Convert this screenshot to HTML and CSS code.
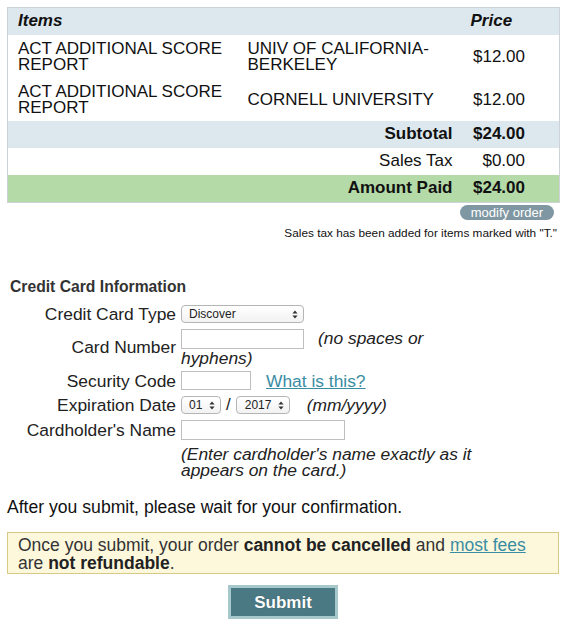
FILE: index.html
```html
<!DOCTYPE html>
<html>
<head>
<meta charset="utf-8">
<link rel="stylesheet" href="styles.css">
</head>
<body>
<div class="page">
  <table class="order">
    <colgroup><col class="c1"><col class="c2"><col class="c3"></colgroup>
    <thead>
      <tr class="head"><th class="t1">Items</th><th class="t2"></th><th class="t3">Price</th></tr>
    </thead>
    <tbody>
      <tr class="item"><td class="t1">ACT ADDITIONAL SCORE REPORT</td><td class="t2">UNIV OF CALIFORNIA-BERKELEY</td><td class="t3 num">$12.00</td></tr>
      <tr class="item"><td class="t1">ACT ADDITIONAL SCORE REPORT</td><td class="t2">CORNELL UNIVERSITY</td><td class="t3 num">$12.00</td></tr>
      <tr class="sum blue"><td class="lab strong" colspan="2">Subtotal</td><td class="t3 num strong">$24.00</td></tr>
      <tr class="sum"><td class="lab" colspan="2">Sales Tax</td><td class="t3 num">$0.00</td></tr>
      <tr class="sum green"><td class="lab strong" colspan="2">Amount Paid</td><td class="t3 num strong">$24.00</td></tr>
    </tbody>
  </table>

  <div class="modify-row"><button class="modify" type="button">modify order</button></div>
  <p class="tax-note">Sales tax has been added for items marked with "T."</p>

  <section class="cc">
    <h3 class="cc-title">Credit Card Information</h3>
    <div class="form-grid">
      <div class="lbl">Credit Card Type</div>
      <div class="fld">
        <span class="sel sel-type"><span class="sel-text">Discover</span><svg class="arr" width="6" height="9" viewBox="0 0 6 9"><path d="M3 0.5 L5.6 3.6 H0.4 Z M3 8.5 L5.6 5.4 H0.4 Z" fill="#333"/></svg></span>
      </div>

      <div class="lbl">Card Number</div>
      <div class="fld wrap"><span class="inp inp-num"></span><em class="hint-inline">(no spaces or hyphens)</em></div>

      <div class="lbl">Security Code</div>
      <div class="fld"><span class="inp inp-sec"></span><a class="link what" href="#">What is this?</a></div>

      <div class="lbl">Expiration Date</div>
      <div class="fld exp">
        <span class="sel sel-mm"><span class="sel-text">01</span><svg class="arr" width="6" height="9" viewBox="0 0 6 9"><path d="M3 0.5 L5.6 3.6 H0.4 Z M3 8.5 L5.6 5.4 H0.4 Z" fill="#333"/></svg></span>
        <span class="slash">/</span>
        <span class="sel sel-yy"><span class="sel-text">2017</span><svg class="arr" width="6" height="9" viewBox="0 0 6 9"><path d="M3 0.5 L5.6 3.6 H0.4 Z M3 8.5 L5.6 5.4 H0.4 Z" fill="#333"/></svg></span>
        <em class="fmt">(mm/yyyy)</em>
      </div>

      <div class="lbl">Cardholder's Name</div>
      <div class="fld"><span class="inp inp-name"></span></div>

      <div class="lbl empty"></div>
      <div class="fld hint"><em>(Enter cardholder's name exactly as it appears on the card.)</em></div>
    </div>
  </section>

  <p class="wait">After you submit, please wait for your confirmation.</p>

  <div class="notice">Once you submit, your order <b>cannot be cancelled</b> and <a class="link" href="#">most fees</a><br>are <b>not refundable</b>.</div>

  <div class="submit-row"><button class="submit" type="button">Submit</button></div>
</div>
</body>
</html>
```

FILE: styles.css
```css
* { box-sizing: border-box; }
html, body { margin: 0; padding: 0; background: #fff; }
body {
  font-family: "Liberation Sans", Arial, Helvetica, sans-serif;
  font-size: 17px;
  color: #111;
}
.page { width: 567px; padding: 7px 8px 0 7px; }

/* order table */
.order {
  width: 552px;
  border-collapse: collapse;
  table-layout: fixed;
  border: 1px solid #cdd3d6;
  line-height: 16px;
}
.c1 { width: 230px; }
.c2 { width: 225px; }
.c3 { width: 97px; }
.order th, .order td {
  padding: 5px 5px 6px 10px;
  vertical-align: middle;
  text-align: left;
}
.order th { font-weight: bold; font-style: italic; }
.order .t3 { padding-right: 34px; }
.order .num { text-align: right; }
.order th.t3 { text-align: left; padding-left: 8px; }
.head { background: #dde8ee; }
.blue { background: #dde8ee; }
.green { background: #b4daa8; }
.order .lab { text-align: right; padding-right: 10px; }
.strong { font-weight: bold; }
.item td { padding-top: 6px; padding-bottom: 5px; }

.modify-row { display: flex; justify-content: flex-end; margin-top: 2px; padding-right: 5px; }
.modify {
  font-family: inherit;
  font-size: 13px;
  line-height: 15px;
  height: 15px;
  padding: 0 11px;
  border: none;
  border-radius: 8px;
  background: #7f97a2;
  color: #fff;
}
.tax-note {
  margin: 7px 2px 0 0;
  font-size: 11.8px;
  line-height: 13px;
  text-align: right;
  color: #111;
}

/* credit card */
.cc { margin-top: 38px; }
.cc-title {
  margin: 0 0 9px 3px;
  font-size: 15.7px;
  line-height: 18px;
  font-weight: bold;
  color: #333;
}
.form-grid {
  display: grid;
  grid-template-columns: 169px 300px;
  column-gap: 5px;
  row-gap: 6px;
  line-height: 16px;
  font-size: 17.4px;
  color: #222;
}
.lbl { text-align: right; align-self: center; white-space: nowrap; }
.fld { display: flex; align-items: center; }
.fld.wrap { display: block; }
.fld.hint { display: block; margin-top: 0; }
.inp {
  display: inline-block;
  vertical-align: top;
  border: 1px solid #bfbfbf;
  background: #fff;
  height: 20px;
}
.inp-num { width: 123px; }
.inp-sec { width: 70px; height: 19px; }
.inp-name { width: 164px; }
.hint-inline { margin-left: 14px; line-height: 16px; vertical-align: top; position: relative; top: 1px; }
.wrap { line-height: 16px; }

.sel {
  position: relative;
  display: inline-flex;
  align-items: center;
  height: 18px;
  border: 1px solid #b5b5b5;
  border-radius: 4px;
  background: linear-gradient(#ffffff, #f2f2f2);
  font-size: 12px;
  color: #222;
  padding-left: 7px;
}
.sel-text { line-height: 16px; }
.arr { position: absolute; right: 5px; top: 4px; }
.sel-type { width: 123px; }
.sel-mm { width: 40px; }
.sel-yy { width: 54px; padding-left: 8px; }
.slash { margin: 0 5px 0 5px; font-size: 17px; }
.fmt { margin-left: 17px; }
.link { color: #3a8ca3; text-decoration: underline; }
.what { margin-left: 15px; }

/* bottom */
.wait { margin: 20px 0 0 0; line-height: 18px; font-size: 17.6px; color: #111; }
.notice {
  margin-top: 16px;
  width: 552px;
  background: #fdf8dc;
  border: 1px solid #d8c985;
  padding: 3px 10px 1px 10px;
  line-height: 18px;
  font-size: 17.5px;
  color: #333;
}
.notice b { color: #222; }
.submit-row { display: flex; justify-content: center; margin-top: 11px; }
.submit {
  width: 110px;
  height: 34px;
  background: #4a7984;
  border: 3px solid #a6c7cb;
  color: #fff;
  font-family: inherit;
  font-size: 17px;
  font-weight: bold;
  text-shadow: 0 0 1px rgba(0,0,0,0.4);
  padding: 2px 0 0 0;
}
```
